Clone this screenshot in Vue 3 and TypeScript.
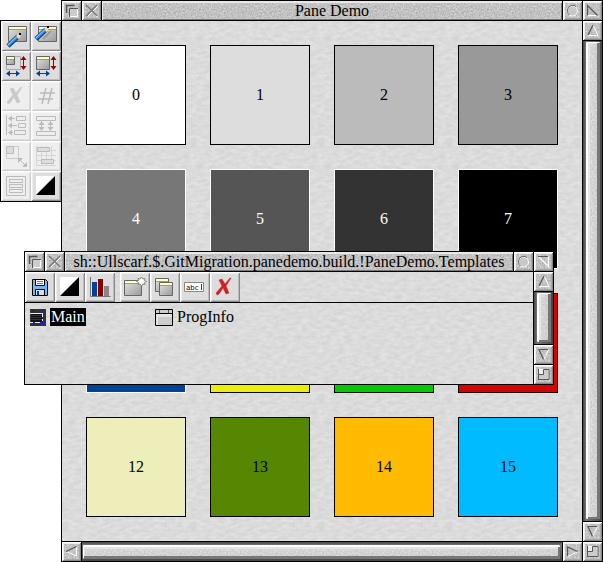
<script setup lang="ts">
interface Shape {
  d: string
  fill?: string
  stroke?: string
  width?: number
}

interface Tool {
  icon: string
  label: string
  disabled?: boolean
  spaced?: boolean
}

const dark = '#555'
const faint = '#bbb'
const panel = 'url(#panel)'

const windowAt = (x: number, y: number, w: number, h: number): Shape[] => [
  { d: `M${x + 0.5} ${y + 0.5}h${w}v${h}h-${w}z`, fill: panel, stroke: '#666' },
  { d: `M${x + 1} ${y + 2}h${w - 1}`, stroke: '#ffffbb', width: 2 },
  { d: `M${x + 1} ${y + 3.5}h${w - 1}`, stroke: '#999' },
]

const pencil = (x: number, y: number): Shape[] => [
  { d: `M${x} ${y + 13}l10 -9.5`, stroke: '#00448a', width: 4.5 },
  { d: `M${x} ${y + 12.5}l10 -9.5`, stroke: '#3d8de0', width: 3 },
  { d: `M${x} ${y + 12}l9.5 -9`, stroke: '#99ccff' },
  { d: `M${x + 8.5} ${y + 2}l4.5 -2l-1 5l-2 1z`, fill: '#ffdd88' },
  { d: `M${x + 11} ${y}h2v2h-2z`, fill: '#000' },
]

const sizeArrows: Shape[] = [
  { d: 'M22.5 7v10', stroke: '#990000' },
  { d: 'M22.5 5l3 4h-6zM22.5 19l3 -4h-6z', fill: '#990000' },
  { d: 'M8 22.5h9', stroke: '#004499' },
  { d: 'M5 22.5l4 -3v6zM19 22.5l-4 -3v6z', fill: '#004499' },
]

const contrast: Shape[] = [
  { d: 'M5 5h19v19h-19z', fill: '#fff' },
  { d: 'M24 5v19h-19z', fill: '#000' },
]

const cross = (colour: string): Shape[] => [
  { d: 'M9 8l3 -1l3 5l5 -6h1l-5 8l3 7l-3 1l-3 -6l-4 6l-2 1l-1 -2l6 -7z', fill: colour, stroke: colour, width: 0.5 },
]

const icons: Record<string, Shape[]> = {
  back: [
    { d: 'M4.5 12v-7.5h8', stroke: dark, width: 1.5 },
    { d: 'M7.5 7.5h8v8h-8z', fill: '#ccc', stroke: '#fff' },
    { d: 'M7.5 16v-8.5h8.5', stroke: dark },
  ],
  close: [
    { d: 'M5 6l10 10M16 5l-10 10', stroke: '#fff' },
    { d: 'M4 4l11 11M15 4l-11 11', stroke: '#777', width: 1.5 },
  ],
  iconise: [
    { d: 'M9.5 5a5 5 0 1 1 -.1 0z', fill: '#c8c8c8', stroke: '#fff' },
    { d: 'M13 5.5a5 5 0 1 0 -6.5 8.5', stroke: '#666' },
  ],
  toggle: [
    { d: 'M4.5 14.5h10', stroke: '#fff' },
    { d: 'M4.5 14.5v-10l10 10', stroke: dark, width: 1.2 },
  ],
  toggled: [
    { d: 'M14.5 4.5v10l-10 -10', stroke: '#fff', width: 1.2 },
    { d: 'M4 4.5h10', stroke: dark },
  ],
  up: [
    { d: 'M10 4l5 10.5h-10', stroke: '#fff' },
    { d: 'M10 4l-5 10', stroke: dark, width: 1.2 },
  ],
  down: [
    { d: 'M14.5 5l-5 10', stroke: '#fff' },
    { d: 'M14 4.5h-9l4.5 10', stroke: dark, width: 1.2 },
  ],
  left: [
    { d: 'M4 9.5l10.5 4.5v-9', stroke: '#fff' },
    { d: 'M4 9.5l10.5 -5', stroke: dark, width: 1.2 },
  ],
  right: [
    { d: 'M15 9.5l-10 5', stroke: '#fff' },
    { d: 'M4.5 14v-9l10 4.5', stroke: dark, width: 1.2 },
  ],
  size: [
    { d: 'M4.5 4.5h10v10h-10z', fill: '#ccc', stroke: '#fff' },
    { d: 'M5 5h4v4h-4z', fill: '#eee' },
    { d: 'M4.5 15v-11M4 9.5h5.5v-5h5.5v10h-10', stroke: dark },
  ],
  editIcon: [...windowAt(7, 5, 18, 15), ...pencil(7, 12)],
  editWindow: [
    ...windowAt(7, 5, 18, 15),
    { d: 'M12 18l8 -8', stroke: '#999', width: 2 },
    ...pencil(5, 5),
  ],
  visibleArea: [
    { d: 'M5.5 5.5h14v13h-14z', stroke: '#aaa' },
    ...windowAt(5, 5, 8, 8),
    ...sizeArrows,
  ],
  workArea: [...windowAt(5, 5, 13, 13), ...sizeArrows],
  remove: cross('#c8c8c8'),
  renumber: [
    { d: 'M15 7l-4 16M21 7l-4 16M9 12h15M7 18h15', stroke: '#bbb', width: 1.5 },
  ],
  align: [
    { d: 'M5.5 4v20M15.5 5.5h9v4h-9zM17.5 12.5h7v4h-7zM13.5 19.5h11v4h-11z', stroke: faint },
    { d: 'M8 7.5h6M8 14.5h8M8 21.5h4', stroke: faint },
    { d: 'M7 7.5l4 -3v6zM7 14.5l4 -3v6zM7 21.5l4 -3v6z', fill: faint },
  ],
  space: [
    { d: 'M5.5 5.5h19v4h-19zM5.5 20.5h19v4h-19zM10.5 12v7M19.5 12v7', stroke: faint },
    { d: 'M10.5 10l3 4h-6zM19.5 10l3 4h-6zM10.5 20l3 -4h-6zM19.5 20l3 -4h-6z', fill: faint },
  ],
  resize: [
    { d: 'M5.5 5.5h12v12h-12z', stroke: '#ccc' },
    { d: 'M5.5 5.5h7v7h-7z', fill: '#ddd', stroke: faint },
    { d: 'M19 19l5 5', stroke: faint },
    { d: 'M17 17h5l-5 5zM26 26h-5l5 -5z', fill: faint },
  ],
  grid: [
    { d: 'M5.5 5v20M10.5 5v20M15.5 5v20M20.5 5v20M5 9.5h20M5 14.5h20M5 19.5h20M5 24.5h20', stroke: '#d6d6d6' },
    { d: 'M6.5 6.5h12v4h-12zM10.5 18.5h12v4h-12z', fill: '#ddd', stroke: faint },
  ],
  select: [
    { d: 'M5.5 5.5h19v19h-19zM8.5 8.5h13v3h-13zM8.5 13.5h13v3h-13zM8.5 18.5h13v3h-13z', stroke: faint },
  ],
  contrast,
  save: [
    { d: 'M7.5 7.5h13l2 2v14h-15z', fill: '#66bbff', stroke: '#000' },
    { d: 'M11 8h8v5h-8z', fill: '#fff' },
    { d: 'M10.5 7.5v6h9v-6', stroke: '#000' },
    { d: 'M12 9.5h6M12 11.5h6', stroke: '#777' },
    { d: 'M10.5 17.5h9v6h-9z', fill: '#ddd', stroke: '#000' },
    { d: 'M12 19h2v4h-2z', fill: '#004499' },
  ],
  chart: [
    { d: 'M7 10h5v14h-5z', fill: '#004499' },
    { d: 'M13 7h5v17h-5z', fill: '#880000' },
    { d: 'M19 14h5v10h-5z', fill: '#888' },
    { d: 'M5.5 5v19.5h20', stroke: '#777' },
  ],
  create: [
    ...windowAt(4, 8, 17, 15),
    { d: 'M21.5 5l1.5 2l2 -.5l-.5 2l2 1l-2 1l.5 2l-2 -.5l-1.5 2l-1.5 -2l-2 .5l.5 -2l-2 -1l2 -1l-.5 -2l2 .5z', fill: '#ffffbb', stroke: '#888' },
    { d: 'M20 8h3v3h-3z', fill: '#fff' },
  ],
  copy: [...windowAt(5, 6, 13, 13), ...windowAt(9, 10, 13, 13)],
  rename: [
    { d: 'M4.5 10.5h19v9h-19z', fill: '#fff', stroke: '#888' },
    { d: 'M21.5 12v6', stroke: '#dd0000' },
  ],
  erase: cross('#cc2222'),
  windowSelected: [
    { d: 'M1 0h16v17h-16z', fill: '#333' },
    { d: 'M2 4h12v9h-12z', fill: '#111' },
    { d: 'M2 6.5h11M2 8.5h11M2 10.5h11M2 2.5h11', stroke: '#333' },
    { d: 'M4.5 0v4M13.5 0v17M4.5 14v3', stroke: '#224' },
    { d: 'M1 4.5h13M1 13.5h3M6 13.5h5M13.5 5v3M13.5 10v2', stroke: '#eee' },
    { d: 'M4 13.5h2M11 13.5h6M13.5 2v2M13.5 15v2', stroke: '#22c' },
  ],
  window: [
    { d: 'M.5 .5h17v16h-17z', fill: '#e4e4e4', stroke: '#000' },
    { d: 'M1 1h16v3h-16z', fill: '#ccc' },
    { d: 'M3 8h14v8h-14z', fill: '#ccc' },
    { d: 'M0 4.5h17', stroke: '#000' },
    { d: 'M4.5 1v3M13.5 1v3', stroke: '#555' },
  ],
}

const colours: string[] = [
  '#ffffff', '#dddddd', '#bbbbbb', '#999999',
  '#777777', '#555555', '#333333', '#000000',
  '#004499', '#eeee00', '#00cc00', '#dd0000',
  '#eeeebb', '#558800', '#ffbb00', '#00bbff',
]
const isDark = (index: number): boolean => index >= 4 && index <= 8

const toolbox: Tool[] = [
  { icon: 'editIcon', label: 'Edit icon' },
  { icon: 'editWindow', label: 'Edit window' },
  { icon: 'visibleArea', label: 'Visible area' },
  { icon: 'workArea', label: 'Work area' },
  { icon: 'remove', label: 'Delete', disabled: true },
  { icon: 'renumber', label: 'Renumber', disabled: true },
  { icon: 'align', label: 'Align', disabled: true },
  { icon: 'space', label: 'Space out', disabled: true },
  { icon: 'resize', label: 'Resize', disabled: true },
  { icon: 'grid', label: 'Snap to grid', disabled: true },
  { icon: 'select', label: 'Select all', disabled: true },
  { icon: 'contrast', label: 'Colours' },
]

const toolbar: Tool[] = [
  { icon: 'save', label: 'Save' },
  { icon: 'contrast', label: 'Colours' },
  { icon: 'chart', label: 'Statistics' },
  { icon: 'create', label: 'New template', spaced: true },
  { icon: 'copy', label: 'Copy' },
  { icon: 'rename', label: 'Rename' },
  { icon: 'erase', label: 'Delete' },
]

const templates = [
  { name: 'Main', icon: 'windowSelected', selected: true },
  { name: 'ProgInfo', icon: 'window', selected: false },
]

const titleGadgets = (toggle: string) => [
  { area: 'back', icon: 'back', label: 'Send to back' },
  { area: 'close', icon: 'close', label: 'Close' },
  { area: 'iconise', icon: 'iconise', label: 'Iconise' },
  { area: 'toggle', icon: toggle, label: 'Toggle size' },
  { area: 'up', icon: 'up', label: 'Scroll up' },
  { area: 'down', icon: 'down', label: 'Scroll down' },
  { area: 'size', icon: 'size', label: 'Adjust size' },
]

const mainGadgets = [
  ...titleGadgets('toggle'),
  { area: 'left', icon: 'left', label: 'Scroll left' },
  { area: 'right', icon: 'right', label: 'Scroll right' },
]
const templateGadgets = titleGadgets('toggled')
</script>

<template>
  <div class="desktop">
    <svg class="defs" aria-hidden="true">
      <defs>
        <linearGradient id="panel" x1="0" y1="0" x2="1" y2="1">
          <stop offset="0" stop-color="#e4e4e4" />
          <stop offset="1" stop-color="#999" />
        </linearGradient>
      </defs>
    </svg>

    <section class="window main-window">
      <h1 class="title">Pane Demo</h1>
      <button v-for="g in mainGadgets" :key="g.area" type="button" :class="['gadget', g.area]" :aria-label="g.label">
        <svg viewBox="0 0 19 19" aria-hidden="true">
          <path v-for="(s, i) in icons[g.icon]" :key="i" :d="s.d" :fill="s.fill ?? 'none'" :stroke="s.stroke ?? 'none'" :stroke-width="s.width ?? 1" />
        </svg>
      </button>
      <div class="track vertical"><div class="thumb"></div></div>
      <div class="track horizontal"><div class="thumb"></div></div>
      <div class="work swatches">
        <div v-for="(colour, i) in colours" :key="colour" :class="['swatch', { inverse: isDark(i) }]" :style="{ backgroundColor: colour }">{{ i }}</div>
      </div>
    </section>

    <div class="toolbox" role="toolbar" aria-label="Tools">
      <button v-for="t in toolbox" :key="t.icon" type="button" class="tool" :disabled="t.disabled" :aria-label="t.label">
        <svg viewBox="0 0 30 30" aria-hidden="true">
          <path v-for="(s, i) in icons[t.icon]" :key="i" :d="s.d" :fill="s.fill ?? 'none'" :stroke="s.stroke ?? 'none'" :stroke-width="s.width ?? 1" />
        </svg>
      </button>
    </div>

    <section class="window template-window">
      <h2 class="title">sh::Ullscarf.$.GitMigration.panedemo.build.!PaneDemo.Templates</h2>
      <button v-for="g in templateGadgets" :key="g.area" type="button" :class="['gadget', g.area]" :aria-label="g.label">
        <svg viewBox="0 0 19 19" aria-hidden="true">
          <path v-for="(s, i) in icons[g.icon]" :key="i" :d="s.d" :fill="s.fill ?? 'none'" :stroke="s.stroke ?? 'none'" :stroke-width="s.width ?? 1" />
        </svg>
      </button>
      <div class="track vertical"><div class="thumb"></div></div>
      <div class="work browser">
        <div class="toolbar" role="toolbar" aria-label="Template tools">
          <button v-for="t in toolbar" :key="t.icon" type="button" :class="['tool', { spaced: t.spaced }]" :aria-label="t.label">
            <svg viewBox="0 0 30 30" aria-hidden="true">
              <path v-for="(s, i) in icons[t.icon]" :key="i" :d="s.d" :fill="s.fill ?? 'none'" :stroke="s.stroke ?? 'none'" :stroke-width="s.width ?? 1" />
              <text v-if="t.icon === 'rename'" class="tiny" x="6" y="18">abc</text>
            </svg>
          </button>
        </div>
        <div class="files">
          <button v-for="f in templates" :key="f.name" type="button" :class="['file', { selected: f.selected }]">
            <svg viewBox="0 0 18 17" aria-hidden="true">
              <path v-for="(s, i) in icons[f.icon]" :key="i" :d="s.d" :fill="s.fill ?? 'none'" :stroke="s.stroke ?? 'none'" :stroke-width="s.width ?? 1" />
            </svg>
            <span>{{ f.name }}</span>
          </button>
        </div>
      </div>
    </section>
  </div>
</template>

<style>
body {
  background: #fff;
}
</style>

<style scoped>
.desktop {
  --paper: url("data:image/svg+xml,%3Csvg xmlns='http://www.w3.org/2000/svg' width='128' height='128'%3E%3Cfilter id='n' x='0' y='0' width='1' height='1' color-interpolation-filters='sRGB'%3E%3CfeTurbulence type='fractalNoise' baseFrequency='.14 .3' numOctaves='3' stitchTiles='stitch'/%3E%3CfeColorMatrix values='.11 0 0 0 .805 .1 .01 0 0 .805 .1 0 .02 0 .8 0 0 0 0 1'/%3E%3C/filter%3E%3Crect width='128' height='128' filter='url(%23n)'/%3E%3C/svg%3E");
  --metal: url("data:image/svg+xml,%3Csvg xmlns='http://www.w3.org/2000/svg' width='96' height='96'%3E%3Cfilter id='n' x='0' y='0' width='1' height='1' color-interpolation-filters='sRGB'%3E%3CfeTurbulence type='fractalNoise' baseFrequency='.6' numOctaves='2' stitchTiles='stitch'/%3E%3CfeColorMatrix values='.3 0 0 0 .61 .3 0 0 0 .61 .3 0 0 0 .61 0 0 0 0 1'/%3E%3C/filter%3E%3Crect width='96' height='96' filter='url(%23n)'/%3E%3C/svg%3E");
  position: relative;
  min-height: 100vh;
  overflow: hidden;
  font-family: "Palatino Linotype", Palatino, "Liberation Serif", serif;
  font-size: 16px;
  line-height: 18px;
  color: #000;
}

.defs {
  position: absolute;
  width: 0;
  height: 0;
}

button {
  margin: 0;
  padding: 0;
  border: 0;
  font: inherit;
  color: inherit;
}

svg {
  display: block;
}

.window {
  position: absolute;
  display: grid;
  grid-template-columns: 19px 19px minmax(0, 1fr) 19px 19px;
  gap: 1px;
  padding: 1px;
  background: #000;
}

.main-window {
  inset: 0 0 0 61px;
  grid-template-rows: 19px 19px minmax(0, 1fr) 19px 19px;
  grid-template-areas:
    "back close title iconise toggle"
    "work work work work up"
    "work work work work vbar"
    "work work work work down"
    "left hbar hbar right size";
}

.template-window {
  left: 24px;
  top: 251px;
  grid-template-columns: 19px 19px auto 19px 19px;
  grid-template-rows: 19px 19px 52px 19px 19px;
  grid-template-areas:
    "back close title iconise toggle"
    "work work work work up"
    "work work work work vbar"
    "work work work work down"
    "work work work work size";
}

.template-window .title {
  min-width: 448px;
  box-sizing: border-box;
}

.title {
  grid-area: title;
  margin: 0;
  overflow: hidden;
  background: #bbb var(--metal);
  box-shadow: inset 1px 2px 0 #e8e8e8, inset -1px -1px 0 #777;
  font-size: 16px;
  font-weight: normal;
  line-height: 20px;
  text-align: center;
  white-space: nowrap;
}

.gadget {
  background: #ccc var(--metal);
  box-shadow: inset 1px 1px 0 #fff, inset -1px -1px 0 #888, inset 2px 2px 0 #eee, inset -2px -2px 0 #aaa;
}

.back { grid-area: back; }
.close { grid-area: close; }
.iconise { grid-area: iconise; }
.toggle { grid-area: toggle; }
.up { grid-area: up; }
.down { grid-area: down; }
.left { grid-area: left; }
.right { grid-area: right; }
.size { grid-area: size; }

.track {
  display: flex;
}

.vertical {
  grid-area: vbar;
  padding: 1px 2px 2px 3px;
  background: linear-gradient(90deg, #444, #777 3px, #555 15px, #444);
}

.horizontal {
  grid-area: hbar;
  padding: 3px 2px 2px 1px;
  background: linear-gradient(#444, #777 3px, #555 15px, #444);
}

.thumb {
  flex: 1;
  border-radius: 1px;
}

.vertical .thumb {
  background: linear-gradient(90deg, #fff6, #fff3), var(--metal);
  box-shadow: inset 2px 1px 0 #fff, inset -3px -2px 0 #777, inset 4px 2px 0 #e4e4e4;
}

.horizontal .thumb {
  background: linear-gradient(#fff6, #fff3), var(--metal);
  box-shadow: inset 1px 2px 0 #fff, inset -2px -3px 0 #777, inset 2px 4px 0 #e4e4e4;
}

.work {
  grid-area: work;
  overflow: hidden;
  background: #ddd var(--paper);
}

.swatches {
  display: grid;
  grid-template-columns: repeat(4, 100px);
  grid-auto-rows: 100px;
  align-content: start;
  gap: 24px;
  padding: 24px;
}

.swatch {
  display: flex;
  align-items: center;
  justify-content: center;
  border: 1px solid #000;
}

.swatch.inverse {
  border-color: #fff;
  color: #fff;
}

.toolbox {
  position: absolute;
  left: 0;
  top: 20px;
  display: grid;
  grid-template-columns: repeat(2, 30px);
  border: 1px solid #000;
}

.tool {
  width: 30px;
  height: 30px;
  background: #ddd;
  box-shadow: inset 1px 1px 0 #fff, inset -1px -1px 0 #888, inset 2px 2px 0 #eee, inset -2px -2px 0 #bbb;
}

.tool:disabled {
  background: #eee;
  box-shadow: inset 1px 1px 0 #fff, inset -1px -1px 0 #ccc, inset 2px 2px 0 #f6f6f6, inset -2px -2px 0 #ddd;
}

.tool.spaced {
  margin-left: 5px;
}

.tiny {
  font-family: "DejaVu Sans", sans-serif;
  font-size: 7px;
}

.toolbar {
  display: flex;
  border-bottom: 1px solid #000;
}

.files {
  display: grid;
  grid-template-columns: repeat(auto-fill, 126px);
  padding: 5px 4px;
}

.file {
  display: flex;
  gap: 3px;
  align-items: center;
  background: none;
}

.file svg {
  width: 18px;
  height: 17px;
}

.file span {
  padding: 0 1px;
}

.file.selected span {
  background: #000;
  color: #fff;
}
</style>
